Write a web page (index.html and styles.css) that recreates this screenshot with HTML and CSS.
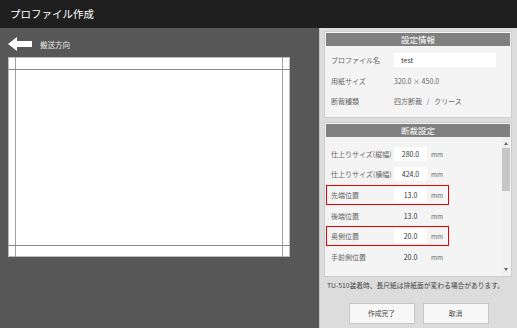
FILE: index.html
```html
<!DOCTYPE html>
<html lang="ja">

<head>
    <meta charset="UTF-8">
    <meta name="viewport" content="width=device-width, initial-scale=1.0">
    <title>プロファイル作成</title>
    <link rel="stylesheet" href="styles.css">
</head>

<body>
    <div class="titlebar">プロファイル作成</div>

    <div class="main">
        <div class="preview">
            <div class="direction">
                <svg class="arrow" width="24" height="14" viewBox="0 0 24 14">
                    <polygon points="0,7 9,0 9,4 24,4 24,10 9,10 9,14" fill="#fff" />
                </svg>
                <span>搬送方向</span>
            </div>
            <svg class="paper" width="282" height="200" viewBox="0 0 282 200">
                <rect x="0.5" y="0.5" width="281" height="199" fill="#fff" stroke="#bdbdbd" />
                <line x1="7.5" y1="0" x2="7.5" y2="200" stroke="#a0a0a0" />
                <line x1="274.5" y1="0" x2="274.5" y2="200" stroke="#a0a0a0" />
                <line x1="0" y1="12.5" x2="282" y2="12.5" stroke="#8a8a8a" />
                <line x1="0" y1="188.5" x2="282" y2="188.5" stroke="#8a8a8a" />
            </svg>
        </div>

        <div class="panel">
            <div class="section">
                <div class="section-head">設定情報</div>
                <div class="section-body info">
                    <div class="row">
                        <span class="label">プロファイル名</span>
                        <span class="input wide">test</span>
                    </div>
                    <div class="row">
                        <span class="label">用紙サイズ</span>
                        <span class="value">320.0 × 450.0</span>
                    </div>
                    <div class="row">
                        <span class="label">断裁種類</span>
                        <span class="value">四方断裁&nbsp;&nbsp;&nbsp;/&nbsp;&nbsp;&nbsp;クリース</span>
                    </div>
                </div>
            </div>

            <div class="section cut">
                <div class="section-head">断裁設定</div>
                <div class="section-body scroll">
                    <div class="rows">
                        <div class="row">
                            <span class="label">仕上りサイズ(縦幅)</span>
                            <span class="input num">280.0</span>
                            <span class="unit">mm</span>
                        </div>
                        <div class="row">
                            <span class="label">仕上りサイズ(横幅)</span>
                            <span class="input num">424.0</span>
                            <span class="unit">mm</span>
                        </div>
                        <div class="row marked">
                            <span class="label">先端位置</span>
                            <span class="input num">13.0</span>
                            <span class="unit">mm</span>
                        </div>
                        <div class="row">
                            <span class="label">後端位置</span>
                            <span class="num">13.0</span>
                            <span class="unit">mm</span>
                        </div>
                        <div class="row marked">
                            <span class="label">奥側位置</span>
                            <span class="input num">20.0</span>
                            <span class="unit">mm</span>
                        </div>
                        <div class="row">
                            <span class="label">手前側位置</span>
                            <span class="num">20.0</span>
                            <span class="unit">mm</span>
                        </div>
                    </div>
                    <div class="scrollbar">
                        <span class="sb-up"></span>
                        <span class="sb-thumb"></span>
                        <span class="sb-space"></span>
                        <span class="sb-down"></span>
                    </div>
                </div>
            </div>

            <div class="note">TU-510装着時、長尺紙は排紙面が変わる場合があります。</div>

            <div class="buttons">
                <button type="button" class="btn">作成完了</button>
                <button type="button" class="btn">取消</button>
            </div>
        </div>
    </div>
</body>

</html>
```

FILE: styles.css
```css
body {
    margin: 0;
    width: 517px;
    height: 328px;
    overflow: hidden;
    font-family: "Noto Sans CJK JP", "Liberation Sans", sans-serif;
    background-color: #575757;
}

.titlebar {
    height: 28px;
    line-height: 28px;
    padding-left: 10px;
    background-color: #1f1f1f;
    color: #fff;
    font-size: 10.5px;
}

.main {
    display: flex;
    height: 300px;
}

/* 左側: 用紙プレビュー */
.preview {
    width: 303px;
    padding: 9px 8px;
}

.direction {
    display: flex;
    align-items: center;
    height: 14px;
    gap: 8px;
    color: #eee;
    font-size: 7.5px;
}

.paper {
    display: block;
    margin-top: 6px;
}

/* 右側: 設定パネル */
.panel {
    flex: 1;
    display: flex;
    flex-direction: column;
    padding: 3px 5px 0 4px;
    background-color: #dcdcdc;
    border-left: 1px solid #c4c4c4;
}

.section {
    background-color: #f4f4f4;
    border: 1px solid #cdcdcd;
    padding: 1px;
}

.section.cut {
    margin-top: 4px;
}

.section-head {
    height: 13px;
    line-height: 13px;
    background-color: #808080;
    color: #fff;
    font-size: 8.5px;
    text-align: center;
}

.section-body.info {
    padding: 4px 0 4px;
}

.section-body.scroll {
    display: flex;
    height: 138px;
}

.rows {
    flex: 1;
    padding-top: 7px;
}

.row {
    display: flex;
    align-items: center;
    height: 20.6px;
    box-sizing: border-box;
    font-size: 7px;
    color: #666;
}

.info .row {
    height: 20.5px;
}

.cut .row {
    width: 123px;
    border: 1px solid transparent;
}

.cut .row.marked {
    border-color: #e60000;
}

.label {
    width: 63px;
    padding-left: 5px;
    flex-shrink: 0;
}

.cut .label {
    padding-left: 4px;
}

.value {
    color: #666;
}

.input {
    height: 14px;
    line-height: 14px;
    background-color: #fff;
    color: #333;
}

.input.wide {
    width: 95px;
    padding-left: 7px;
}

.num {
    width: 33px;
    text-align: center;
    color: #333;
}

.unit {
    margin-left: 4px;
    color: #666;
    font-size: 6.5px;
}

.scrollbar {
    width: 8px;
    display: flex;
    flex-direction: column;
    align-items: center;
    background-color: #f0f0f0;
}

.sb-up,
.sb-down {
    width: 0;
    height: 0;
    border-left: 2.5px solid transparent;
    border-right: 2.5px solid transparent;
}

.sb-up {
    margin-top: 5px;
    border-bottom: 3px solid #666;
}

.sb-down {
    margin-bottom: 4px;
    border-top: 3px solid #666;
}

.sb-thumb {
    width: 8px;
    height: 43px;
    margin-top: 3px;
    background-color: #c6c6c6;
}

.sb-space {
    flex: 1;
}

.note {
    margin-top: 3px;
    line-height: 10px;
    padding-left: 3px;
    font-size: 6.75px;
    color: #444;
    white-space: nowrap;
}

.buttons {
    display: flex;
    justify-content: center;
    gap: 8px;
    margin-top: 13px;
    padding-left: 1px;
}

.btn {
    width: 66px;
    height: 21px;
    padding: 0;
    background-color: #f7f7f7;
    border: 1px solid #c6c6c6;
    font-family: "Noto Sans CJK JP", "Liberation Sans", sans-serif;
    font-size: 6.8px;
    color: #444;
}
```
